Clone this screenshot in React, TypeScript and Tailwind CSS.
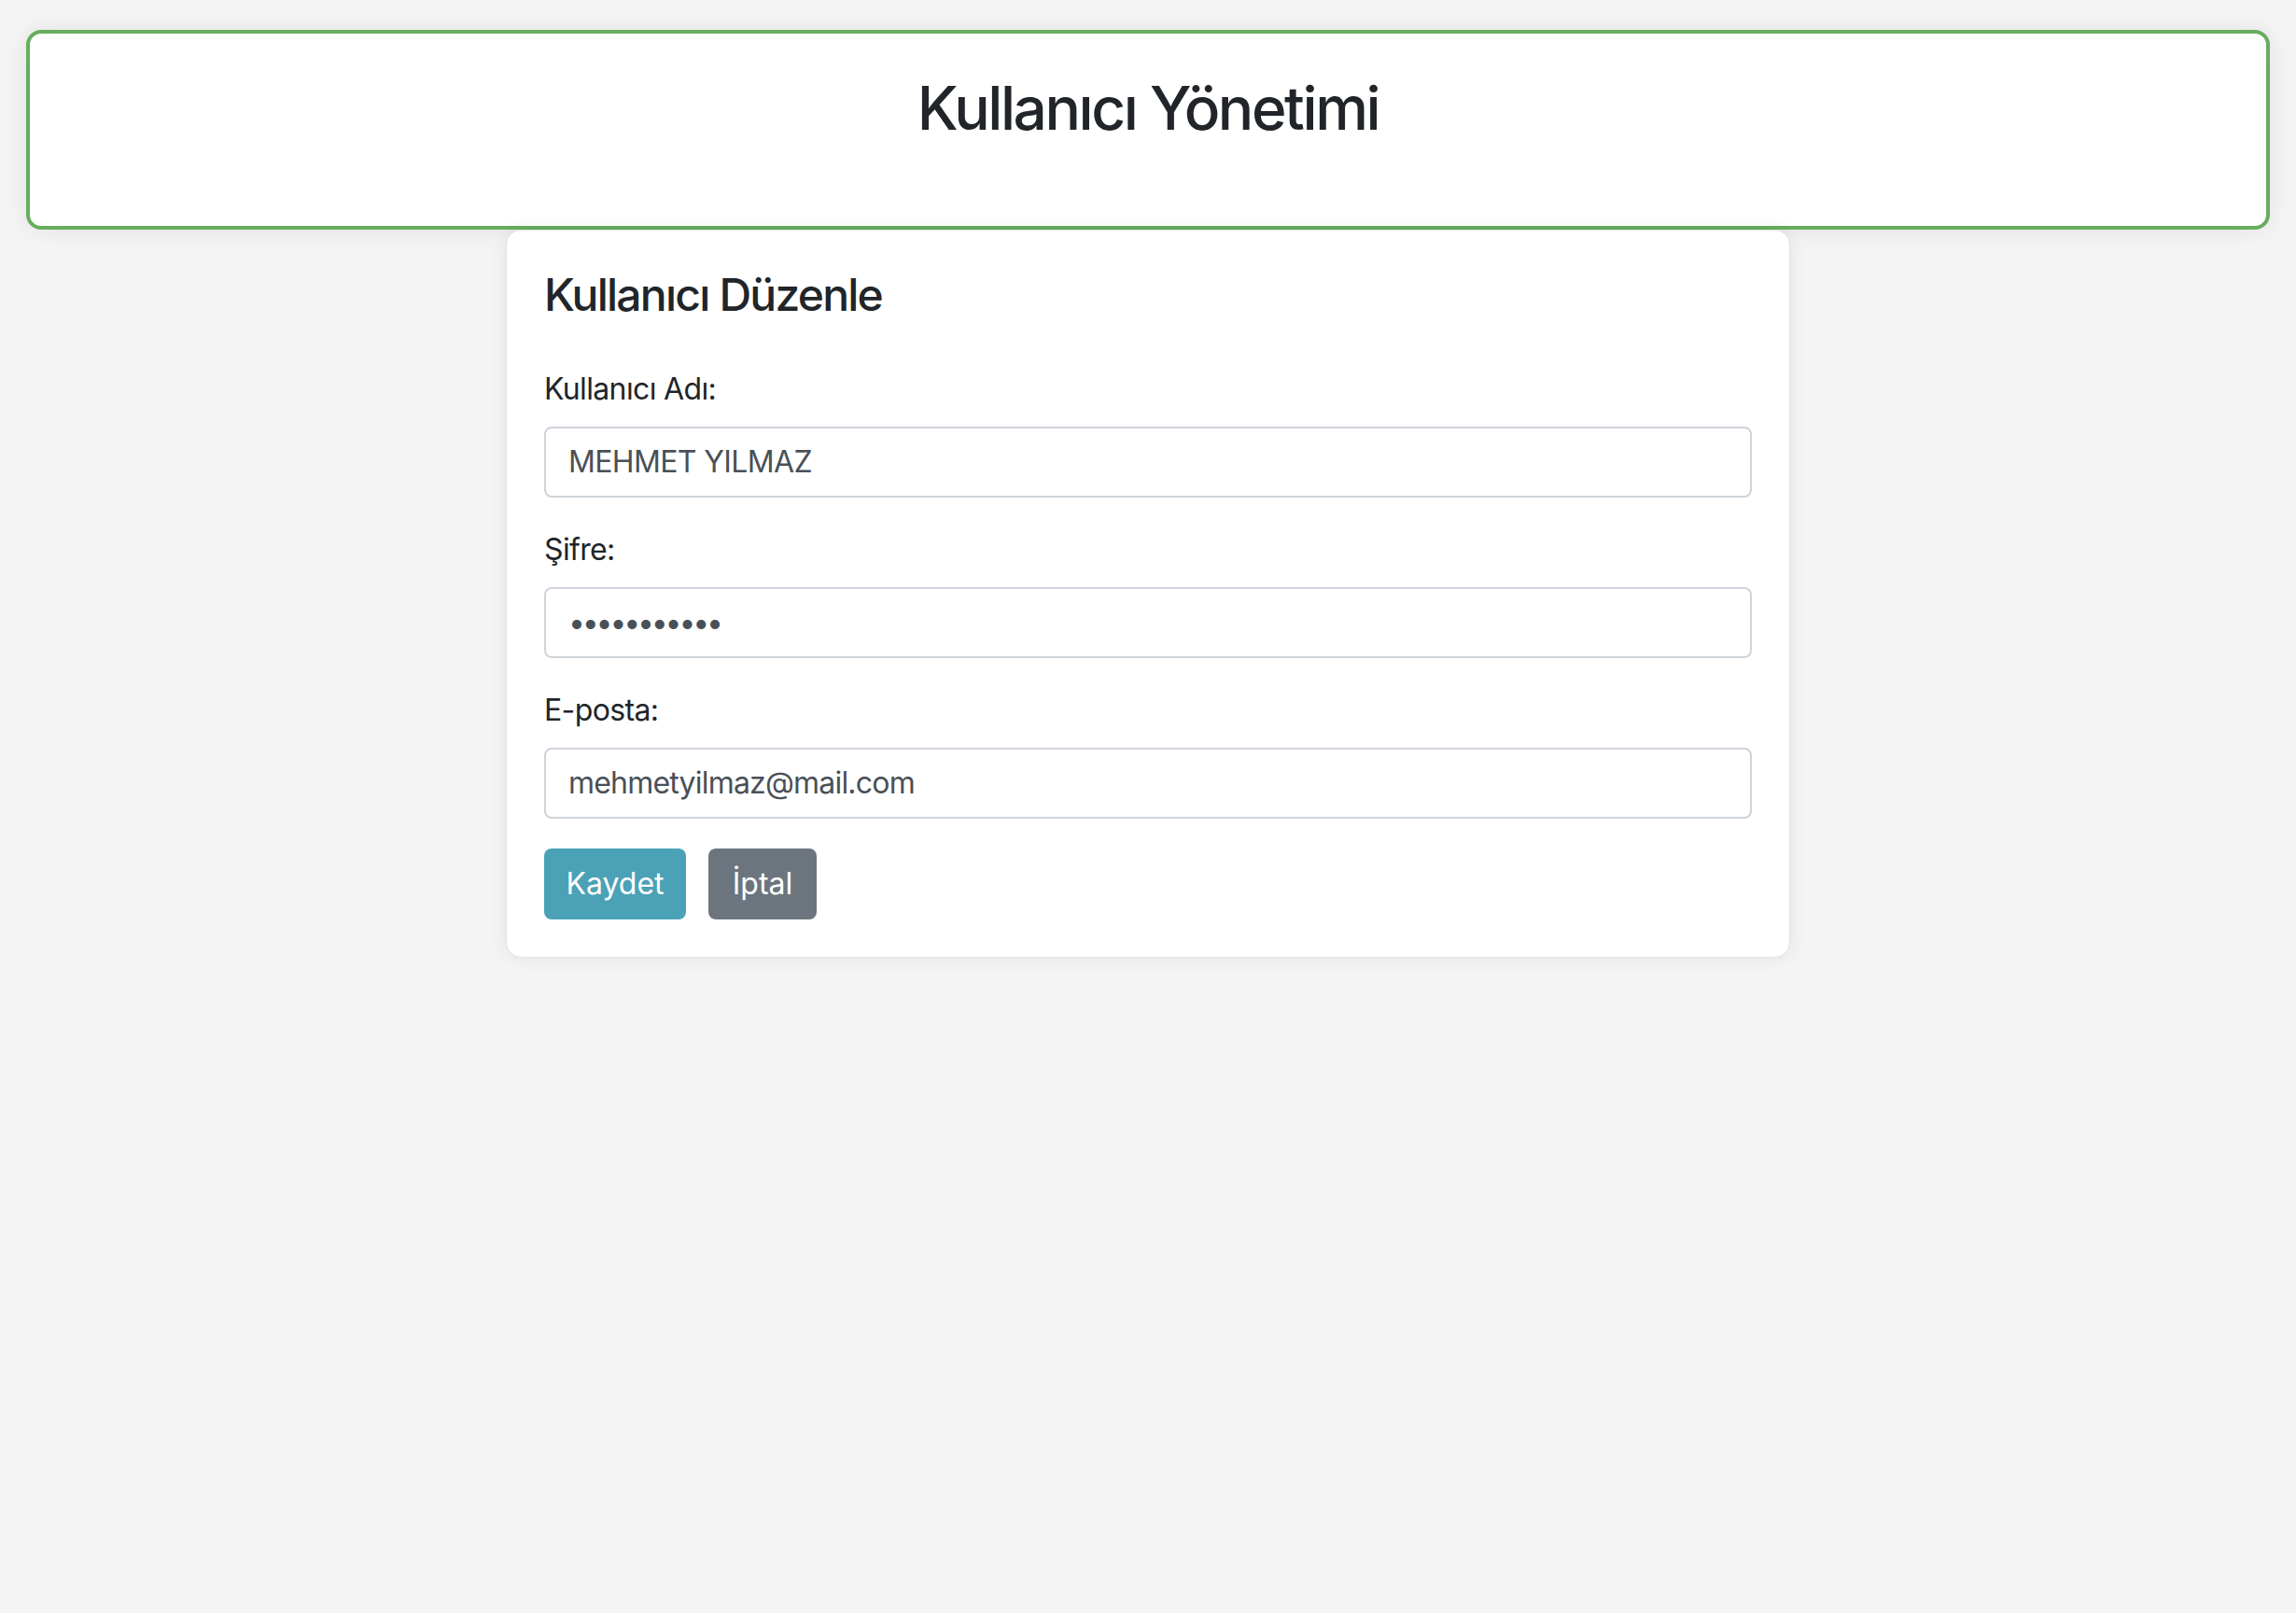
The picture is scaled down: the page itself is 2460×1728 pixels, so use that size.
import { useState } from 'react'

export default function App() {
  const [username, setUsername] = useState('MEHMET YILMAZ')
  const [password, setPassword] = useState('12345678901')
  const [email, setEmail] = useState('mehmetyilmaz@mail.com')

  const inputClass =
    'block w-full h-[76px] rounded-[8px] border-2 border-[#ced4da] bg-white px-[24px] text-[32px] text-[#495057] outline-none'

  return (
    <div
      className="min-h-screen bg-[#f4f4f4] px-[28px] pt-[32px] text-[#212529]"
      style={{ fontFamily: 'Inter, "Noto Sans", sans-serif' }}
    >
      <header className="h-[214px] rounded-[16px] border-4 border-[#68ad5f] bg-white pt-[42px] text-center shadow-[0_0_24px_rgba(0,0,0,0.08)]">
        <h1 className="text-[64px] font-medium leading-[1.2] tracking-[-0.038em]">Kullanıcı Yönetimi</h1>
      </header>

      <div className="mx-auto w-[1376px] rounded-[16px] border border-[#e2e2e2] bg-white p-[40px] shadow-[0_0_20px_rgba(0,0,0,0.08)]">
        <h2 className="mb-[48px] text-[48px] font-medium leading-[1.2] tracking-[-0.037em]">Kullanıcı Düzenle</h2>

        <div className="mb-[32px]">
          <label className="mb-[16px] block text-[32px] leading-[48px] tracking-[-0.02em]">Kullanıcı Adı:</label>
          <input
            type="text"
            value={username}
            onChange={(e) => setUsername(e.target.value)}
            className={inputClass + ' tracking-[-0.02em]'}
          />
        </div>

        <div className="mb-[32px]">
          <label className="mb-[16px] block text-[32px] leading-[48px] tracking-[-0.02em]">Şifre:</label>
          <input
            type="password"
            value={password}
            onChange={(e) => setPassword(e.target.value)}
            className={inputClass + ' tracking-[-0.1em]'}
          />
        </div>

        <div className="mb-[32px]">
          <label className="mb-[16px] block text-[32px] leading-[48px] tracking-[-0.02em]">E-posta:</label>
          <input
            type="email"
            value={email}
            onChange={(e) => setEmail(e.target.value)}
            className={inputClass + ' tracking-[-0.025em]'}
          />
        </div>

        <div className="flex gap-[24px]">
          <button className="h-[76px] w-[152px] rounded-[8px] bg-[#4ba1b6] text-center text-[32px] text-white">
            Kaydet
          </button>
          <button className="h-[76px] w-[116px] rounded-[8px] bg-[#6c757d] text-center text-[32px] text-white">
            İptal
          </button>
        </div>
      </div>
    </div>
  )
}
